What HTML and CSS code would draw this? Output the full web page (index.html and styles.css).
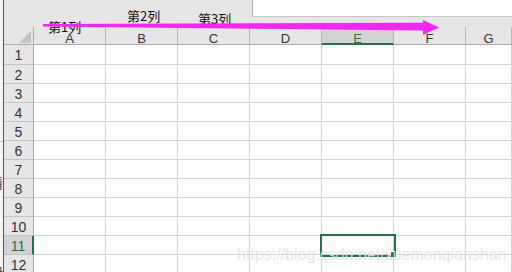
FILE: index.html
```html
<!DOCTYPE html>
<html lang="zh-CN">
<head>
    <meta charset="UTF-8">
    <meta name="viewport" content="width=device-width, initial-scale=1.0">
    <title>Sheet</title>
    <link rel="stylesheet" href="styles.css">
</head>
<body>
    <div class="app">
        <div class="strip">
            <div class="strip-line"></div>
            <div class="strip-char">猜</div>
            <div class="strip-char low">块</div>
        </div>
        <div class="sheet">
            <div class="topbar">
                <div class="namebox"></div>
                <div class="formula"></div>
            </div>
            <div class="band"></div>
            <div class="grid">
                <div class="row head">
                    <div class="corner"></div>
                    <div class="ch">A</div>
                    <div class="ch">B</div>
                    <div class="ch">C</div>
                    <div class="ch">D</div>
                    <div class="ch active">E</div>
                    <div class="ch">F</div>
                    <div class="ch wide">G</div>
                </div>
                <div class="row first"><div class="rh">1</div><div class="c"></div><div class="c"></div><div class="c"></div><div class="c"></div><div class="c"></div><div class="c"></div><div class="c wide"></div></div>
                <div class="row"><div class="rh">2</div><div class="c"></div><div class="c"></div><div class="c"></div><div class="c"></div><div class="c"></div><div class="c"></div><div class="c wide"></div></div>
                <div class="row"><div class="rh">3</div><div class="c"></div><div class="c"></div><div class="c"></div><div class="c"></div><div class="c"></div><div class="c"></div><div class="c wide"></div></div>
                <div class="row"><div class="rh">4</div><div class="c"></div><div class="c"></div><div class="c"></div><div class="c"></div><div class="c"></div><div class="c"></div><div class="c wide"></div></div>
                <div class="row"><div class="rh">5</div><div class="c"></div><div class="c"></div><div class="c"></div><div class="c"></div><div class="c"></div><div class="c"></div><div class="c wide"></div></div>
                <div class="row"><div class="rh">6</div><div class="c"></div><div class="c"></div><div class="c"></div><div class="c"></div><div class="c"></div><div class="c"></div><div class="c wide"></div></div>
                <div class="row"><div class="rh">7</div><div class="c"></div><div class="c"></div><div class="c"></div><div class="c"></div><div class="c"></div><div class="c"></div><div class="c wide"></div></div>
                <div class="row"><div class="rh">8</div><div class="c"></div><div class="c"></div><div class="c"></div><div class="c"></div><div class="c"></div><div class="c"></div><div class="c wide"></div></div>
                <div class="row"><div class="rh">9</div><div class="c"></div><div class="c"></div><div class="c"></div><div class="c"></div><div class="c"></div><div class="c"></div><div class="c wide"></div></div>
                <div class="row"><div class="rh">10</div><div class="c"></div><div class="c"></div><div class="c"></div><div class="c"></div><div class="c"></div><div class="c"></div><div class="c wide"></div></div>
                <div class="row"><div class="rh active">11</div><div class="c"></div><div class="c"></div><div class="c"></div><div class="c"></div><div class="c sel"></div><div class="c"></div><div class="c wide"></div></div>
                <div class="row"><div class="rh">12</div><div class="c"></div><div class="c"></div><div class="c"></div><div class="c"></div><div class="c"></div><div class="c"></div><div class="c wide"></div></div>
            </div>
        </div>

        <!-- annotations drawn over the screenshot -->
        <span class="label l1">第1列</span>
        <span class="label l2">第2列</span>
        <span class="label l3">第3列</span>
        <svg class="arrow" width="512" height="60" viewBox="0 0 512 60">
            <polygon points="43,24 423,22.8 423,20 439,27.5 423,35 423,30.5 43,26.6" fill="#f128ee"/>
        </svg>
        <span class="watermark">https://blog.csdn.net/xuemanqianshan</span>
    </div>
</body>
</html>
```

FILE: styles.css
```css
body {
    margin: 0;
    font-family: 'Liberation Sans', Arial, sans-serif;
    background: #ffffff;
}
.app {
    position: relative;
    display: flex;
    width: 512px;
    height: 272px;
    overflow: hidden;
}
.strip {
    width: 3px;
    flex-shrink: 0;
    background: #f6f6f6;
    border-right: 1px solid #217346;
    overflow: hidden;
}
.strip-line {
    margin-top: 141px;
    height: 1px;
    background: #b8b8b8;
}
.strip-char {
    margin-top: 33px;
    margin-left: -11px;
    font-family: 'Noto Sans CJK SC', sans-serif;
    font-size: 14px;
    line-height: 14px;
    color: #444;
}
.strip-char.low {
    margin-top: 74px;
}
.sheet {
    flex: 1;
    min-width: 0;
    background: #e6e6e6;
}
.topbar {
    display: flex;
    height: 17px;
}
.namebox {
    width: 248px;
}
.formula {
    flex: 1;
    background: #ffffff;
    border-left: 1px solid #b4b4b4;
    border-bottom: 1px solid #c6c6c6;
}
.band {
    height: 10px;
}
.grid {
    background: #ffffff;
}
.row {
    display: flex;
    height: 19px;
}
.row.first {
    height: 20px;
}
.row.head {
    height: 18px;
    background: #e6e6e6;
}
.corner {
    box-sizing: border-box;
    width: 30px;
    display: flex;
    justify-content: flex-end;
    align-items: flex-end;
    padding: 0 2px 1px 0;
    border-right: 1px solid #ababab;
    border-bottom: 1px solid #ababab;
}
.corner::after {
    content: '';
    width: 12px;
    height: 12px;
    background: #c3c3c3;
    clip-path: polygon(100% 0, 100% 100%, 0 100%);
}
.ch {
    box-sizing: border-box;
    width: 72px;
    flex-shrink: 0;
    padding-top: 3px;
    font-size: 13px;
    line-height: 17px;
    text-align: center;
    color: #333;
    border-right: 1px solid #b6b6b6;
    border-bottom: 1px solid #ababab;
}
.ch.active {
    background: #d2d2d2;
    color: #217346;
    border-bottom: 2px solid #217346;
}
.rh {
    box-sizing: border-box;
    width: 30px;
    flex-shrink: 0;
    padding-top: 1px;
    font-size: 14px;
    line-height: 18px;
    text-align: center;
    color: #333;
    background: #e6e6e6;
    border-right: 1px solid #ababab;
    border-bottom: 1px solid #c4c4c4;
}
.rh.active {
    background: #d2d2d2;
    color: #217346;
    border-right: 2px solid #217346;
}
.c {
    box-sizing: border-box;
    width: 72px;
    flex-shrink: 0;
    border-right: 1px solid #d4d4d4;
    border-bottom: 1px solid #d4d4d4;
}
.wide {
    flex: 1;
    min-width: 0;
}
.c.sel {
    position: relative;
    z-index: 1;
    outline: 2px solid #217346;
}
.c.sel::after {
    content: '';
    position: absolute;
    right: -3px;
    bottom: -3px;
    width: 5px;
    height: 5px;
    background: #217346;
    box-shadow: -1px -1px 0 #ffffff;
}
.label {
    position: absolute;
    font-family: 'Noto Sans CJK SC', sans-serif;
    font-size: 13px;
    line-height: 13px;
    color: #111;
    z-index: 2;
}
.l1 { left: 48px; top: 20px; }
.l2 { left: 127px; top: 9px; }
.l3 { left: 198px; top: 12px; }
.arrow {
    position: absolute;
    left: 0;
    top: 0;
    z-index: 3;
}
.watermark {
    position: absolute;
    left: 237px;
    top: 247px;
    font-size: 16px;
    line-height: 16px;
    color: rgba(226, 226, 226, 0.85);
    z-index: 4;
}
```
